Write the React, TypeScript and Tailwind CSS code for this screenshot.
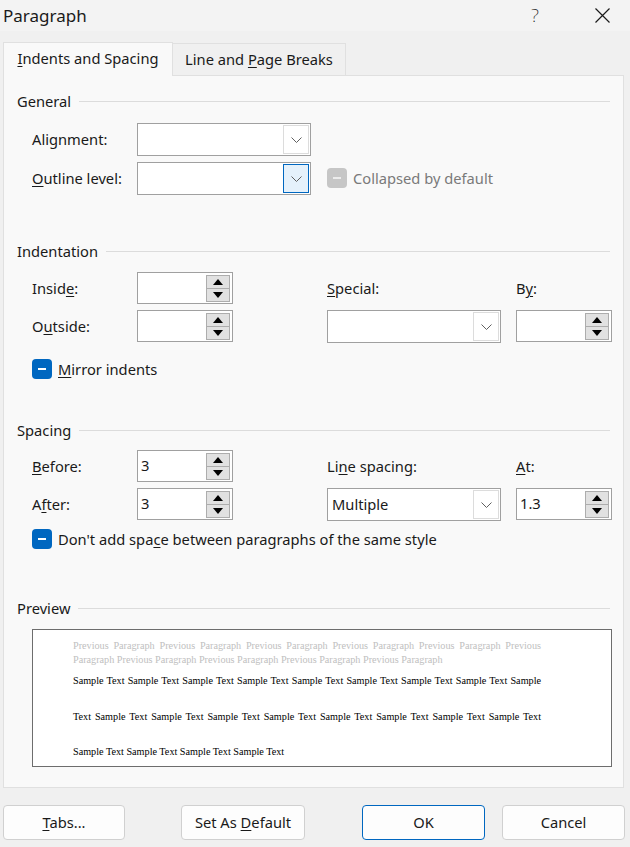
import React from 'react';

const ui = "font-['Noto_Sans',sans-serif]";

function Chevron() {
  return (
    <svg width="11" height="6" viewBox="0 0 11 6" fill="none">
      <path d="M0.5 0.5 L5.5 5.5 L10.5 0.5" stroke="#5f5f5f" strokeWidth="1" />
    </svg>
  );
}

function Combo({ value, focused }: { value?: string; focused?: boolean }) {
  return (
    <div className="flex h-[33px] w-[174px] items-center border border-[#a0a0a0] bg-white">
      <span className="flex-1 pl-[4px] text-[14.7px] text-[#1a1a1a]">{value}</span>
      <span
        className={`mr-[1px] flex h-[29px] w-[26px] items-center justify-center border ${
          focused ? 'border-[#0067c0] bg-[#e5f1fb]' : 'border-[#dcdcdc] bg-white'
        }`}
      >
        <Chevron />
      </span>
    </div>
  );
}

function Arrow({ up }: { up?: boolean }) {
  return (
    <svg width="10" height="6" viewBox="0 0 10 6">
      <path d={up ? 'M0 6 L5 0 L10 6 Z' : 'M0 0 L10 0 L5 6 Z'} fill="#000" />
    </svg>
  );
}

function Spin({ value }: { value?: string }) {
  return (
    <div className="flex h-[32px] w-[96px] items-center border border-[#a0a0a0] bg-white">
      <span className="flex-1 pl-[3px] pb-[2px] text-[14.7px] text-[#1a1a1a]">{value}</span>
      <div className="mr-[2px] flex flex-col">
        <span className="flex h-[14px] w-[24px] items-center justify-center border border-[#adadad] bg-[#e1e1e1]">
          <Arrow up />
        </span>
        <span className="mt-[-1px] flex h-[14px] w-[24px] items-center justify-center border border-[#adadad] bg-[#e1e1e1]">
          <Arrow />
        </span>
      </div>
    </div>
  );
}

function Check({ label, disabled }: { label: React.ReactNode; disabled?: boolean }) {
  return (
    <div className="flex h-[20px] items-center gap-[6px]">
      <span
        className={`flex h-[20px] w-[20px] items-center justify-center rounded-[4px] ${
          disabled ? 'bg-[#c6c6c6]' : 'bg-[#0067c0]'
        }`}
      >
        <span className={`h-[2px] w-[8px] ${disabled ? 'bg-[#ececec]' : 'bg-white'}`} />
      </span>
      <span className={`text-[14.7px] ${disabled ? 'text-[#7a7a7a]' : 'text-[#1a1a1a]'}`}>{label}</span>
    </div>
  );
}

function Heading({ children }: { children: React.ReactNode }) {
  return (
    <div className="flex h-[20px] items-center gap-[8px]">
      <span className="text-[14.7px] text-[#1a1a1a]">{children}</span>
      <span className="h-px flex-1 bg-[#dcdcdc]" />
    </div>
  );
}

function Label({ children }: { children: React.ReactNode }) {
  return <span className="flex items-center text-[14.7px] text-[#1a1a1a]">{children}</span>;
}

function Btn({ children, primary, w }: { children: React.ReactNode; primary?: boolean; w: string }) {
  return (
    <button
      className={`flex h-[35px] ${w} items-center justify-center rounded-[4px] border bg-[#fdfdfd] text-[14.7px] text-[#1a1a1a] ${
        primary ? 'border-[#0067c0]' : 'border-[#d0d0d0]'
      }`}
    >
      {children}
    </button>
  );
}

const prev = 'Previous Paragraph';
const sample = 'Sample Text';

export default function App() {
  return (
    <div className={`${ui} h-[847px] w-[630px] overflow-hidden bg-[#f0f0f0]`}>
      {/* title bar */}
      <div className="flex h-[31px] items-center bg-[#f3f3f3]">
        <span className="ml-[3px] text-[17px] text-[#1a1a1a]">Paragraph</span>
        <span className="ml-auto text-[19px] font-extralight text-[#1a1a1a]">?</span>
        <svg className="ml-[56px] mr-[20px]" width="15" height="15" viewBox="0 0 15 15">
          <path d="M0.5 0.5 L14.5 14.5 M14.5 0.5 L0.5 14.5" stroke="#1a1a1a" strokeWidth="1.2" />
        </svg>
      </div>

      {/* tabs */}
      <div className="relative z-10 mt-[11px] flex items-end pl-[3px]">
        <div className="mb-[-1px] flex h-[34px] w-[170px] items-center justify-center border border-b-0 border-[#e0e0e0] bg-[#f9f9f9] pb-[2px] text-[14.7px] text-[#1a1a1a]">
          <span>
            <u className="underline-offset-2">I</u>ndents and Spacing
          </span>
        </div>
        <div className="flex h-[32px] w-[173px] items-center justify-center border border-b-0 border-l-0 border-[#e0e0e0] bg-[#f0f0f0] text-[14.7px] text-[#1a1a1a]">
          <span>
            Line and <u className="underline-offset-2">P</u>age Breaks
          </span>
        </div>
      </div>

      {/* panel */}
      <div className="ml-[3px] w-[621px] border border-[#e0e0e0] bg-[#f9f9f9] px-[13px] pb-[20px]">
        <div className="mt-[15px]">
          <Heading>General</Heading>
        </div>
        <div className="ml-[15px] mt-[12px] grid grid-cols-[105px_190px_284px] gap-y-[6px]">
          <Label>Alignment:</Label>
          <Combo />
          <div />
          <Label>
            <u className="underline-offset-2">O</u>utline level:
          </Label>
          <div className="h-[32px]">
            <Combo focused />
          </div>
          <div className="flex items-center">
            <Check disabled label="Collapsed by default" />
          </div>
        </div>

        <div className="mt-[47px]">
          <Heading>Indentation</Heading>
        </div>
        <div className="ml-[15px] mt-[11px] grid grid-cols-[105px_190px_189px_95px] gap-y-[6px]">
          <Label>
            Insid<u className="underline-offset-2">e</u>:
          </Label>
          <Spin />
          <Label>
            <u className="underline-offset-2">S</u>pecial:
          </Label>
          <Label>
            B<u className="underline-offset-2">y</u>:
          </Label>
          <Label>
            O<u className="underline-offset-2">u</u>tside:
          </Label>
          <Spin />
          <Combo />
          <Spin />
        </div>
        <div className="ml-[15px] mt-[16px]">
          <Check
            label={
              <>
                <u className="underline-offset-2">M</u>irror indents
              </>
            }
          />
        </div>

        <div className="mt-[41px]">
          <Heading>Spacing</Heading>
        </div>
        <div className="ml-[15px] mt-[10px] grid grid-cols-[105px_190px_189px_95px] gap-y-[6px]">
          <Label>
            <u className="underline-offset-2">B</u>efore:
          </Label>
          <Spin value="3" />
          <Label>
            Li<u className="underline-offset-2">n</u>e spacing:
          </Label>
          <Label>
            <u className="underline-offset-2">A</u>t:
          </Label>
          <Label>
            A<u className="underline-offset-2">f</u>ter:
          </Label>
          <Spin value="3" />
          <Combo value="Multiple" />
          <Spin value="1.3" />
        </div>
        <div className="ml-[15px] mt-[8px]">
          <Check
            label={
              <>
                Don't add spa<u className="underline-offset-2">c</u>e between paragraphs of the same style
              </>
            }
          />
        </div>

        <div className="mt-[49px]">
          <Heading>Preview</Heading>
        </div>
        <div className="ml-[15px] mt-[11px] h-[138px] w-[580px] border border-[#6d6d6d] bg-white pl-[40px] pt-[9px] font-['Liberation_Serif',serif] text-[10.2px]">
          <div className="w-[468px] text-[#c0c0c0]">
            <div className="h-[14px] text-justify leading-[14px] [text-align-last:justify]">
              {Array(5).fill(prev).join(' ')} Previous
            </div>
            <div className="h-[14px] leading-[14px]">Paragraph {Array(4).fill(prev).join(' ')}</div>
          </div>
          <div className="mt-[7px] w-[468px] text-black">
            <div className="h-[14px] text-justify leading-[14px] [text-align-last:justify]">
              {Array(8).fill(sample).join(' ')} Sample
            </div>
            <div className="mt-[22px] h-[14px] text-justify leading-[14px] [text-align-last:justify]">
              Text {Array(8).fill(sample).join(' ')}
            </div>
            <div className="mt-[21px] h-[14px] leading-[14px]">{Array(4).fill(sample).join(' ')}</div>
          </div>
        </div>
      </div>

      {/* buttons */}
      <div className="mt-[17px] flex pl-[3px]">
        <Btn w="w-[122px]">
          <span>
            <u className="underline-offset-2">T</u>abs...
          </span>
        </Btn>
        <div className="ml-[56px]">
          <Btn w="w-[124px]">
            <span>
              Set As <u className="underline-offset-2">D</u>efault
            </span>
          </Btn>
        </div>
        <div className="ml-[57px]">
          <Btn primary w="w-[123px]">
            OK
          </Btn>
        </div>
        <div className="ml-[17px]">
          <Btn w="w-[123px]">Cancel</Btn>
        </div>
      </div>
    </div>
  );
}
